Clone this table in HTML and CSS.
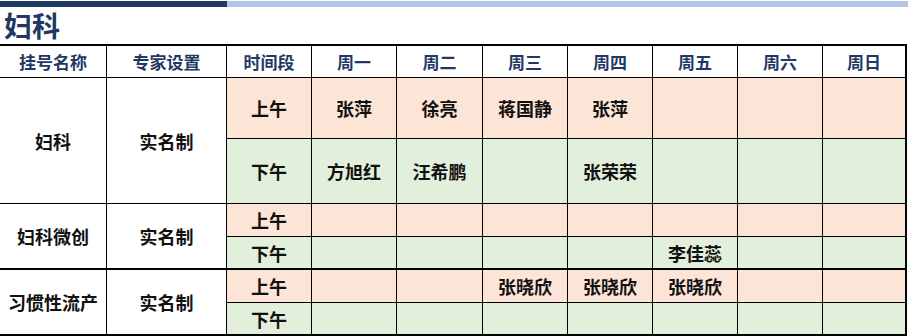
FILE: index.html
```html
<!DOCTYPE html>
<html lang="zh">
<head>
<meta charset="utf-8">
<link rel="stylesheet" href="styles.css">
</head>
<body>
<div class="topbar"><div class="bar-dark"></div><div class="bar-light"></div></div>
<h1 class="title">妇科</h1>
<div class="grid">
  <div class="cell head">挂号名称</div>
  <div class="cell head">专家设置</div>
  <div class="cell head">时间段</div>
  <div class="cell head">周一</div>
  <div class="cell head">周二</div>
  <div class="cell head">周三</div>
  <div class="cell head">周四</div>
  <div class="cell head">周五</div>
  <div class="cell head">周六</div>
  <div class="cell head last">周日</div>

  <div class="cell name span2">妇科</div>
  <div class="cell name span2">实名制</div>
  <div class="cell am">上午</div>
  <div class="cell am">张萍</div>
  <div class="cell am">徐亮</div>
  <div class="cell am">蒋国静</div>
  <div class="cell am">张萍</div>
  <div class="cell am"></div>
  <div class="cell am"></div>
  <div class="cell am last"></div>

  <div class="cell pm">下午</div>
  <div class="cell pm">方旭红</div>
  <div class="cell pm">汪希鹏</div>
  <div class="cell pm"></div>
  <div class="cell pm">张荣荣</div>
  <div class="cell pm"></div>
  <div class="cell pm"></div>
  <div class="cell pm last"></div>

  <div class="cell name span2 thick">妇科微创</div>
  <div class="cell name span2 thick">实名制</div>
  <div class="cell am">上午</div>
  <div class="cell am"></div>
  <div class="cell am"></div>
  <div class="cell am"></div>
  <div class="cell am"></div>
  <div class="cell am"></div>
  <div class="cell am"></div>
  <div class="cell am last"></div>

  <div class="cell pm thick">下午</div>
  <div class="cell pm thick"></div>
  <div class="cell pm thick"></div>
  <div class="cell pm thick"></div>
  <div class="cell pm thick"></div>
  <div class="cell pm thick">李佳蕊</div>
  <div class="cell pm thick"></div>
  <div class="cell pm thick last"></div>

  <div class="cell name span2 thick">习惯性流产</div>
  <div class="cell name span2 thick">实名制</div>
  <div class="cell am">上午</div>
  <div class="cell am"></div>
  <div class="cell am"></div>
  <div class="cell am">张晓欣</div>
  <div class="cell am">张晓欣</div>
  <div class="cell am">张晓欣</div>
  <div class="cell am"></div>
  <div class="cell am last"></div>

  <div class="cell pm thick">下午</div>
  <div class="cell pm thick"></div>
  <div class="cell pm thick"></div>
  <div class="cell pm thick"></div>
  <div class="cell pm thick"></div>
  <div class="cell pm thick"></div>
  <div class="cell pm thick"></div>
  <div class="cell pm thick last"></div>
</div>
</body>
</html>
```
FILE: styles.css
```css
* { box-sizing: border-box; }
html, body {
  margin: 0;
  padding: 0;
  background: #ffffff;
  width: 908px;
  height: 336px;
  overflow: hidden;
  font-family: "Noto Sans CJK SC", "Microsoft YaHei", sans-serif;
}
.topbar {
  display: flex;
  height: 6px;
  margin-top: 1px;
}
.bar-dark { width: 227px; background: #203864; }
.bar-light { flex: 1; background: #b4c6e7; }
.title {
  margin: 0;
  height: 37px;
  line-height: 37px;
  padding-left: 4px;
  font-size: 28px;
  font-weight: 700;
  color: #1f3864;
}
.grid {
  display: grid;
  grid-template-columns: 107px 120px 85px 85px 86px 85px 85px 85px 85px 84px;
  grid-template-rows: 32px 61px 65px 33px 33px 33px 33px;
  border-top: 2px solid #000;
  width: 907px;
}
.cell {
  display: flex;
  align-items: center;
  justify-content: center;
  border-right: 1px solid #000;
  border-bottom: 1px solid #000;
  font-size: 18px;
  font-weight: 700;
  color: #111;
  white-space: nowrap;
}
.cell.last { border-right: 2px solid #000; }
.cell.thick { border-bottom: 2px solid #000; }
.head {
  font-size: 17px;
  color: #1f3864;
  background: #fff;
}
.name { background: #fff; }
.span2 { grid-row: span 2; }
.am { background: #fce4d6; }
.pm { background: #e2efda; }
```
